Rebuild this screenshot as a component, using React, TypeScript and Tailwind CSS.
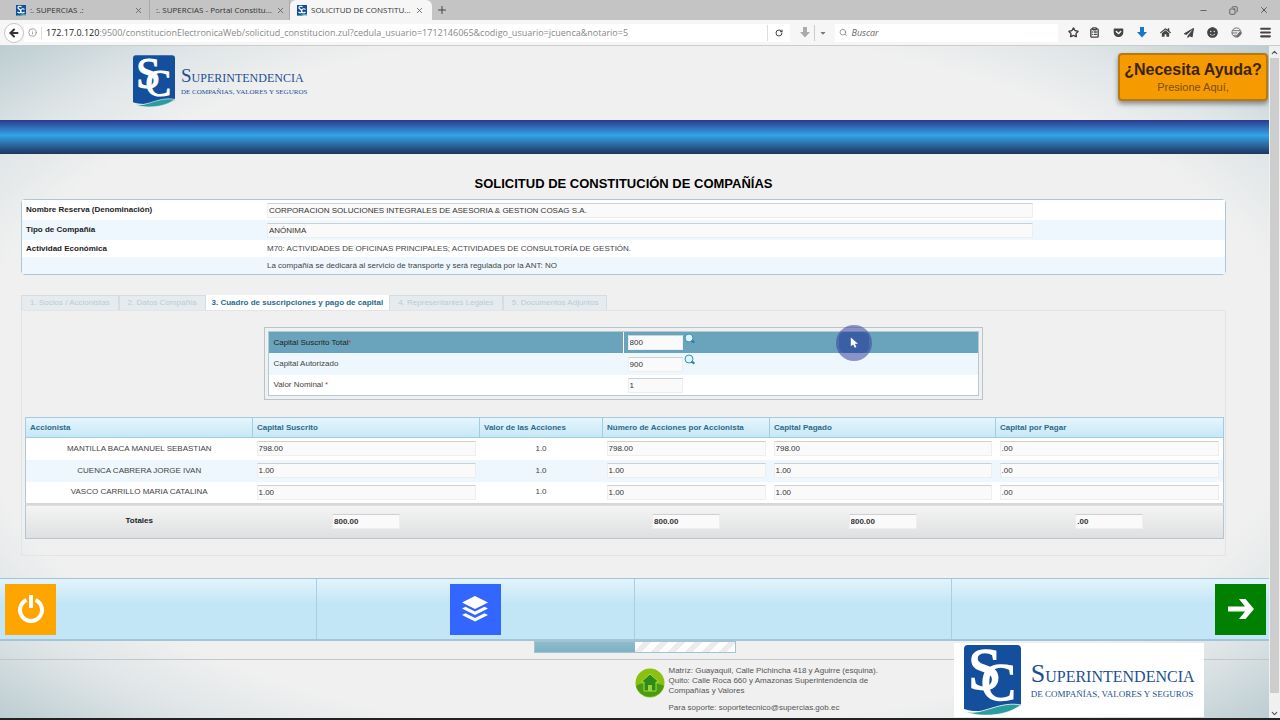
import type { ReactNode } from 'react'
import {
  ArrowLeft,
  ChevronDown,
  ChevronUp,
  ClipboardList,
  Copy,
  Info,
  Menu,
  Minus,
  Plus,
  RotateCw,
  Search,
  Star,
  X,
} from 'lucide-react'
import { FaCaretDown, FaGetPocket, FaHome, FaPaperPlane, FaSmile } from 'react-icons/fa'

const shareholders = [
  { name: 'MANTILLA BACA MANUEL SEBASTIAN', amount: '798.00' },
  { name: 'CUENCA CABRERA JORGE IVAN', amount: '1.00' },
  { name: 'VASCO CARRILLO MARIA CATALINA', amount: '1.00' },
]

const headers = [
  'Accionista',
  'Capital Suscrito',
  'Valor de las Acciones',
  'Número de Acciones por Accionista',
  'Capital Pagado',
  'Capital por Pagar',
]

const steps = [
  '1. Socios / Accionistas',
  '2. Datos Compañía',
  '3. Cuadro de suscripciones y pago de capital',
  '4. Representantes Legales',
  '5. Documentos Adjuntos',
]

const fieldClass =
  'block h-[15px] border border-[#eceeef] border-t-[#cfd0d2] bg-[#fafafa] px-px text-[#333] outline-none'

function Emblem({ className }: { className: string }) {
  return (
    <svg viewBox="0 0 57 70" className={className} aria-hidden="true">
      <path d="M4 0h49q4 0 4 4v57c-10-2-17 0-27 3S9 67 0 64V4q0-4 4-4z" fill="#134f9c" />
      <path d="M0 66c10 3 18 0 28-3s19-5 29-3c-7 5-12 7-21 9-12 2-26 2-36-3z" fill="#2a9c9f" stroke="#fff" strokeWidth=".8" />
      <g fill="#fff" stroke="#fff" strokeWidth="1.5" fontFamily="Liberation Serif, serif">
        <text x="4" y="44" fontSize="60">S</text>
        <text x="17" y="55" fontSize="52">C</text>
      </g>
    </svg>
  )
}

function Favicon() {
  return (
    <svg viewBox="0 0 10 11" className="h-[11px] w-[10px] shrink-0" fill="none" aria-hidden="true">
      <path d="M0 0h10v9.500c-4-1-6 1.500-10 .5z" fill="#134f9c" />
      <path d="M0 10.500c4 1 6-1.500 10-.500" stroke="#2a9c9f" />
      <path d="M5.500 2C4 .5 1.500 1.500 2 3s3.500 1.500 3 3.500-2.500 1.500-3.500.5M8.500 4.500C7 3 4.500 4 4.500 6s2.500 2.500 4 1" stroke="#fff" strokeWidth="1.200" />
    </svg>
  )
}

function BlockArrow({ className }: { className: string }) {
  return (
    <svg viewBox="0 0 10 11" className={className} fill="currentColor" aria-hidden="true">
      <path d="M3 0h4v5h3l-5 5.500L0 5h3z" />
    </svg>
  )
}

function BrowserTab({ title, active, icon = true }: { title: string; active?: boolean; icon?: boolean }) {
  return (
    <div
      className={
        active
          ? 'flex h-full w-[142px] items-center gap-1 rounded-t-md bg-[#f6f6f6] pr-2 pl-[7px]'
          : 'flex h-full w-[140px] items-center gap-1 border-r border-[#aaa] pr-1.5 pl-1.5'
      }
    >
      {icon && <Favicon />}
      <span className="flex-1 whitespace-nowrap">{title}</span>
      <button aria-label="Cerrar pestaña">
        <X className="size-[9px] text-[#555]" />
      </button>
    </div>
  )
}

function Browser() {
  return (
    <div className="font-['Open_Sans','Noto_Sans',sans-serif] text-[8px] text-[#333]">
      <div className="flex h-5 items-center bg-[#c4c4c4] pl-[10px]">
        <BrowserTab title=":. SUPERCIAS .:" />
        <BrowserTab title=":. SUPERCIAS - Portal Constitu..." icon={false} />
        <BrowserTab title="SOLICITUD DE CONSTITU..." active />
        <button className="ml-1" aria-label="Nueva pestaña">
          <Plus className="size-3 text-[#444]" />
        </button>
        <div className="ml-auto flex gap-[21px] pr-[11px] text-[#444]">
          <button aria-label="Minimizar"><Minus className="size-[9px]" /></button>
          <button aria-label="Restaurar"><Copy className="size-[9px] -scale-x-100" /></button>
          <button aria-label="Cerrar"><X className="size-[10px]" /></button>
        </div>
      </div>
      <div className="flex h-[26px] items-center border-b border-[#ccc] bg-[#f6f6f6] pr-2 pl-1">
        <button aria-label="Atrás" className="flex size-5 items-center justify-center rounded-full border border-[#c5c5c5] bg-white">
          <ArrowLeft className="size-3" strokeWidth={4} />
        </button>
        <div className="flex h-[18px] flex-1 items-center bg-white pl-1">
          <Info className="size-[9px] text-[#888]" />
          <span className="ml-1 h-3 w-px bg-[#ddd]" />
          <p className="ml-1 flex-1 text-[9px] whitespace-nowrap text-[#888]">
            <span className="text-[#222]">172.17.0.120</span>
            :9500/constitucionElectronicaWeb/solicitud_constitucion.zul?cedula_usuario=1712146065&amp;codigo_usuario=jcuenca&amp;notario=5
          </p>
          <span className="h-4 w-px bg-[#ddd]" />
          <button aria-label="Recargar" className="px-[7px]">
            <RotateCw className="size-[8px] text-[#444]" strokeWidth={3} />
          </button>
        </div>
        <button aria-label="Descargar vídeo" className="ml-2.5 text-[#aaa]">
          <BlockArrow className="h-[11px] w-[10px]" />
        </button>
        <span className="mx-1 h-4 w-px bg-[#ccc]" />
        <FaCaretDown className="size-[8px] text-[#777]" />
        <label className="mr-[10px] ml-2 flex h-[18px] w-[223px] items-center gap-1 bg-white px-1">
          <Search className="size-[9px] text-[#777]" />
          <input
            aria-label="Buscar"
            placeholder="Buscar"
            className="w-full text-[9px] italic outline-none placeholder:text-[#666]"
          />
        </label>
        <div className="flex items-center gap-[13px] text-[#444]">
          <Star className="size-[11px]" strokeWidth={3} />
          <ClipboardList className="-ml-[3px] size-[11px]" strokeWidth={3} />
          <FaGetPocket className="size-[11px]" />
          <BlockArrow className="h-[11px] w-[10px] text-[#1a73d0]" />
          <FaHome className="size-[11px]" />
          <FaPaperPlane className="size-[10px]" />
          <FaSmile className="size-[11px]" />
          <svg viewBox="0 0 12 12" className="size-[11px]" fill="none" stroke="#666">
            <circle cx="6" cy="6" r="5" />
            <path d="M2 4h8M1 6.500h6M3 9h3M5 11l5-6" />
            <path d="M6 10.500l4-5 1.500 1-4 4.500z" fill="#666" strokeWidth=".5" />
          </svg>
          <button aria-label="Menú" className="ml-1"><Menu className="size-[13px]" strokeWidth={4} /></button>
        </div>
      </div>
    </div>
  )
}

function SearchButton({ label }: { label: string }) {
  return (
    <button aria-label={label} className="ml-px self-start pt-px">
      <svg viewBox="0 0 11 11" className="size-[11px]">
        <circle cx="5" cy="5" r="4" fill="#dff3fb" stroke="#3d93b5" />
        <path d="M7 8h3v2z" fill="#2f7da0" stroke="#2f7da0" />
      </svg>
    </button>
  )
}

function InfoRow({ label, tinted, children }: { label: string; tinted?: boolean; children: ReactNode }) {
  return (
    <tr className={tinted ? 'bg-[#edf7fd]' : 'bg-white'}>
      <th scope="row" className="w-[245px] pl-1 text-left font-bold text-[#222]">{label}</th>
      <td>{children}</td>
    </tr>
  )
}

function CompanyInfo() {
  return (
    <div className="rounded-sm border border-[#a9c8d0]">
      <table className="w-full">
        <tbody>
          <InfoRow label="Nombre Reserva (Denominación)">
            <div className="flex h-5 items-center">
              <input
                aria-label="Nombre Reserva (Denominación)"
                className={`${fieldClass} w-4/5`}
                readOnly
                value="CORPORACION SOLUCIONES INTEGRALES DE ASESORIA & GESTION COSAG S.A."
              />
            </div>
          </InfoRow>
          <InfoRow label="Tipo de Compañía" tinted>
            <div className="flex h-5 items-center">
              <input aria-label="Tipo de Compañía" className={`${fieldClass} w-4/5`} readOnly value="ANÓNIMA" />
            </div>
          </InfoRow>
          <InfoRow label="Actividad Económica">
            <p className="h-[17px] leading-[17px]">
              M70: ACTIVIDADES DE OFICINAS PRINCIPALES; ACTIVIDADES DE CONSULTORÍA DE GESTIÓN.
            </p>
          </InfoRow>
          <InfoRow label="" tinted>
            <p className="h-[17px] leading-[17px]">
              La compañía se dedicará al servicio de transporte y será regulada por la ANT: NO
            </p>
          </InfoRow>
        </tbody>
      </table>
    </div>
  )
}

function CapitalForm() {
  return (
    <div className="mx-auto w-3/5 border border-[#b5c4cd] p-[3px]">
      <div className="border border-[#b5c9d2] bg-white">
        <div className="relative grid h-[21px] grid-cols-2 items-stretch bg-[#69a3bc]">
          <label htmlFor="suscrito" className="flex items-center border-r border-white pl-1 text-[#222]">
            Capital Suscrito Total<span className="text-[#e0305a]">*</span>
          </label>
          <div className="flex items-center pl-1">
            <input id="suscrito" className={`${fieldClass} w-[55px]`} defaultValue="800" />
            <SearchButton label="Buscar capital suscrito" />
          </div>
          {/* Pointer with click highlight */}
          <div className="absolute top-1/2 left-[82.500%] flex size-9 -translate-x-1/2 -translate-y-1/2 items-center justify-center rounded-full bg-[#38419c]/55">
            <div className="flex h-[21px] w-[30px] items-center justify-center rounded-md bg-[#3a5fa5]">
              <svg viewBox="0 0 10 14" className="h-3 w-2">
                <path d="M1 0v11l3-2 2 4 2-1-2-4h4z" fill="#fff" />
              </svg>
            </div>
          </div>
        </div>
        <div className="grid h-[22px] grid-cols-2 bg-[#edf7fd]">
          <label htmlFor="autorizado" className="flex items-center pl-1">Capital Autorizado</label>
          <div className="flex items-center pl-1">
            <input id="autorizado" className={`${fieldClass} w-[55px]`} defaultValue="900" />
            <SearchButton label="Buscar capital autorizado" />
          </div>
        </div>
        <div className="grid h-5 grid-cols-2">
          <label htmlFor="nominal" className="flex items-center gap-0.5 pl-1">
            Valor Nominal <span className="text-[#c33]">*</span>
          </label>
          <div className="flex items-center pl-1">
            <input id="nominal" className={`${fieldClass} w-[55px]`} readOnly value="1" />
          </div>
        </div>
      </div>
    </div>
  )
}

function AmountCell({ value, label }: { value: string; label: string }) {
  return (
    <td className="px-1">
      <input aria-label={label} className={`${fieldClass} w-full`} readOnly value={value} />
    </td>
  )
}

function TotalCell({ value, label }: { value: string; label: string }) {
  return (
    <td>
      <input aria-label={label} className={`${fieldClass} mx-auto w-[68px] font-bold`} readOnly value={value} />
    </td>
  )
}

function ShareTable() {
  return (
    <table className="mt-[17px] w-full table-fixed border border-[#b4c6d4] bg-white">
      <colgroup>
        <col className="w-[227px]" />
        <col className="w-[227px]" />
        <col className="w-[123px]" />
        <col className="w-[167px]" />
        <col className="w-[226px]" />
        <col className="w-[228px]" />
      </colgroup>
      <thead>
        <tr className="h-5 bg-linear-to-b from-[#e6f5fc] to-[#c4e7f7]">
          {headers.map((h) => (
            <th key={h} scope="col" className="border border-[#a5cbe0] px-1 text-left font-bold whitespace-nowrap text-[#2c6a88]">
              {h}
            </th>
          ))}
        </tr>
      </thead>
      <tbody>
        {shareholders.map((s) => (
          <tr key={s.name} className="h-[22px] bg-white even:bg-[#edf7fd]">
            <td className="text-center">{s.name}</td>
            <AmountCell label={`Capital suscrito de ${s.name}`} value={s.amount} />
            <td className="text-center">1.0</td>
            <AmountCell label={`Número de acciones de ${s.name}`} value={s.amount} />
            <AmountCell label={`Capital pagado de ${s.name}`} value={s.amount} />
            <AmountCell label={`Capital por pagar de ${s.name}`} value=".00" />
          </tr>
        ))}
      </tbody>
      <tfoot>
        <tr className="h-[35px] border-t-2 border-[#d5d7d9] bg-linear-to-b from-[#f4f4f4] to-[#dedfe1]">
          <th scope="row" className="text-center font-bold text-[#222]">Totales</th>
          <TotalCell label="Total capital suscrito" value="800.00" />
          <td />
          <TotalCell label="Total número de acciones" value="800.00" />
          <TotalCell label="Total capital pagado" value="800.00" />
          <TotalCell label="Total capital por pagar" value=".00" />
        </tr>
      </tfoot>
    </table>
  )
}

function ActionBar() {
  return (
    <nav className="mt-[22px] grid h-[63px] grid-cols-4 divide-x divide-[#a9cfe2] border-y border-b-2 border-[#9fc4dc] bg-linear-to-b from-[#e3f4fb] via-[#c3e6f6] via-40% to-[#c3e6f6]">
      <div className="flex items-center pl-[5px]">
        <button aria-label="Salir" className="flex size-[51px] items-center justify-center bg-[#ffa500]">
          <svg viewBox="0 0 28 30" className="h-[30px] w-7" fill="none" stroke="#fff" strokeWidth="4">
            <path d="M9.500 6a11 11 0 1 0 9 0" />
            <path d="M14 1v13" />
          </svg>
        </button>
      </div>
      <div className="flex items-center justify-center">
        <button aria-label="Capas" className="flex size-[51px] items-center justify-center bg-[#3366ff]">
          <svg viewBox="0 0 26 26" className="size-[26px]" fill="#fff">
            <path d="M13 0l13 6.500-13 6.500L0 6.500z" />
            <path d="M0 12.500l3.500-1.700L13 15.500l9.500-4.700 3.500 1.700L13 19z" />
            <path d="M0 19l3.500-1.700L13 22l9.500-4.700L26 19l-13 6.500z" />
          </svg>
        </button>
      </div>
      <div />
      <div className="flex items-center justify-end pr-[3px]">
        <button aria-label="Siguiente" className="flex size-[51px] items-center justify-center bg-[#008000]">
          <svg viewBox="0 0 26 20" className="h-5 w-[26px]" fill="#fff">
            <path d="M0 7.500h17L11 0h6.500L26 10l-8.500 10H11l6-7.500H0z" />
          </svg>
        </button>
      </div>
    </nav>
  )
}

function Footer() {
  return (
    <footer className="flex-1 text-[#555]">
      <div className="flex h-[19px] items-start justify-center border-b border-[#c3c7c8]">
        <div className="flex h-3 w-[202px] border border-[#a5c3cd] bg-white">
          <div className="w-1/2 bg-linear-to-b from-[#8fbccc] to-[#7fb0c4]" />
          <div className="w-1/2 bg-[repeating-linear-gradient(135deg,#fff_0_6px,#ececec_6px_12px)]" />
        </div>
      </div>
      <div className="grid grid-cols-4">
        <div className="col-start-3 flex items-start pt-1.5">
          <svg viewBox="0 0 30 30" className="mt-0.5 size-[30px] shrink-0">
            <circle cx="15" cy="15" r="14.500" fill="#8cc010" />
            <path d="M1 18a14.500 14.500 0 0 0 28 0c-8-4-19-5-28 0z" fill="#4a9b12" />
            <path d="M15 6l9 8h-3v9H9v-9H6z" fill="#2f8a1c" stroke="#a5dc3a" />
            <path d="M13 17h4v6h-4z" fill="#9ad32e" />
          </svg>
          <div className="pl-1 leading-[10px]">
            <p>
              Matríz: Guayaquil, Calle Pichincha 418 y Aguirre (esquina).
              <br />
              Quito: Calle Roca 660 y Amazonas Superintendencia de
              <br />
              Compañías y Valores
            </p>
            <p className="mt-[7px]">Para soporte: soportetecnico@supercias.gob.ec</p>
          </div>
        </div>
        <div className="-mt-[17px] ml-0.5 flex h-[74px] w-[250px] items-center gap-[10px] bg-white pl-[10px] font-['Liberation_Serif',serif] text-[#1d4f90]">
          <Emblem className="h-[70px] w-[57px]" />
          <div className="whitespace-nowrap">
            <p className="text-[16px] leading-6"><span className="text-[26px]">S</span>UPERINTENDENCIA</p>
            <p className="text-[9px] leading-[10px]">DE COMPAÑÍAS, VALORES Y SEGUROS</p>
          </div>
        </div>
      </div>
    </footer>
  )
}

export default function App() {
  return (
    <div className="flex min-h-screen flex-col border-b-2 border-[#222]">
      <Browser />
      <div className="flex flex-1">
        <main className="flex min-w-0 flex-1 flex-col bg-[radial-gradient(ellipse_farthest-corner_at_center,#f0f0f0_74%,#dfe5e7_86%,#bccdd1_100%)] font-['Liberation_Sans',Arial,sans-serif] text-[8px] text-[#444]">
          <header className="flex h-[74px] items-start justify-between pr-px pl-[133px]">
            <div className="flex items-center gap-1.5 pt-[9px] font-['Liberation_Serif',serif] text-[#1d4f90]">
              <Emblem className="h-[52px] w-[42px]" />
              <div className="whitespace-nowrap">
                <p className="text-[12px] leading-5"><span className="text-[19px]">S</span>UPERINTENDENCIA</p>
                <p className="text-[7px] leading-[8px]">DE COMPAÑIAS, VALORES Y SEGUROS</p>
              </div>
            </div>
            <button className="mt-[7px] h-12 w-[150px] rounded-sm border-2 border-[#b87a10] bg-[#f59a00] text-center whitespace-nowrap shadow-[0_3px_5px_rgba(0,0,0,0.4)]">
              <span className="block text-[16px] leading-5 font-bold text-[#3a2410]">¿Necesita Ayuda?</span>
              <span className="block text-[11px] leading-[14px] text-[#7a5010]">Presione Aquí,</span>
            </button>
          </header>
          <div className="h-[34px] bg-linear-to-b from-[#2a3a8c] via-[#32a4e8] via-45% to-[#1e3560]" />
          <div className="pr-[43px] pl-[21px]">
            <h1 className="pt-5 pb-[5px] text-center text-[13px] leading-5 font-bold text-black">
              SOLICITUD DE CONSTITUCIÓN DE COMPAÑÍAS
            </h1>
            <CompanyInfo />
            <div role="tablist" className="mt-5 flex h-[15px]">
              {steps.map((s, i) => (
                <button
                  key={s}
                  role="tab"
                  aria-selected={i === 2}
                  className={
                    i === 2
                      ? 'bg-white px-1.5 font-bold text-[#2c6a88]'
                      : 'border border-b-0 border-[#d3dde3] bg-[#e5ebef] px-2 text-[#bccbd4]'
                  }
                >
                  {s}
                </button>
              ))}
            </div>
            <section className="border border-[#e2e4e5] px-[3px] pt-4 pb-4">
              <CapitalForm />
              <ShareTable />
            </section>
          </div>
          <ActionBar />
          <Footer />
        </main>
        <div className="flex w-[11px] flex-col items-center justify-between bg-[#f0f0f0]">
          <ChevronUp className="mt-0.5 size-[9px] shrink-0 text-[#555]" strokeWidth={3} />
          <div className="mt-px mb-4 w-[9px] flex-1 bg-[#cdcdcd]" />
          <ChevronDown className="size-[9px] shrink-0 text-[#555]" strokeWidth={3} />
        </div>
      </div>
    </div>
  )
}
